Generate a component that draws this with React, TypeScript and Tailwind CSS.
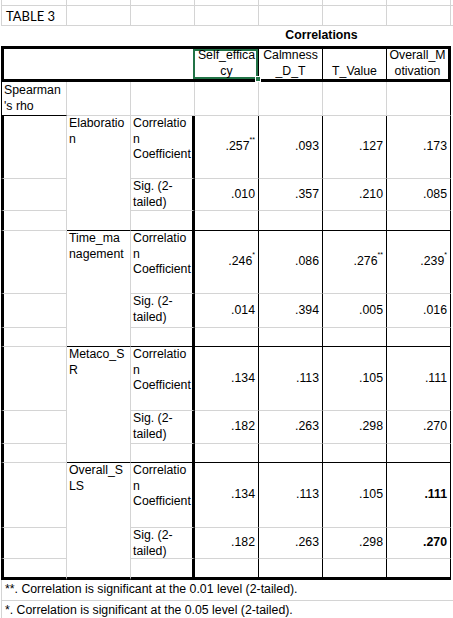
type Val = { v: string; sup?: string; bold?: boolean };

type Group = { name: [string, string]; corr: Val[]; sig: Val[] };

const groups: Group[] = [
  {
    name: ["Elaboratio", "n"],
    corr: [{ v: ".257", sup: "**" }, { v: ".093" }, { v: ".127" }, { v: ".173" }],
    sig: [{ v: ".010" }, { v: ".357" }, { v: ".210" }, { v: ".085" }],
  },
  {
    name: ["Time_ma", "nagement"],
    corr: [{ v: ".246", sup: "*" }, { v: ".086" }, { v: ".276", sup: "**" }, { v: ".239", sup: "*" }],
    sig: [{ v: ".014" }, { v: ".394" }, { v: ".005" }, { v: ".016" }],
  },
  {
    name: ["Metaco_S", "R"],
    corr: [{ v: ".134" }, { v: ".113" }, { v: ".105" }, { v: ".111" }],
    sig: [{ v: ".182" }, { v: ".263" }, { v: ".298" }, { v: ".270" }],
  },
  {
    name: ["Overall_S", "LS"],
    corr: [{ v: ".134" }, { v: ".113" }, { v: ".105" }, { v: ".111", bold: true }],
    sig: [{ v: ".182" }, { v: ".263" }, { v: ".298" }, { v: ".270", bold: true }],
  },
];

function Num({ val }: { val: Val }) {
  return (
    <span className={val.bold ? "font-bold" : ""}>
      {val.v}
      {val.sup && <span className="relative -top-[8px] text-[7px] leading-none">{val.sup}</span>}
    </span>
  );
}

// thin gray spreadsheet gridline cell
function GridCell({ first }: { first?: boolean }) {
  return (
    <div
      className={
        first
          ? "border-l border-r border-b border-[#d4d4d4]"
          : "border-r border-b border-[#d4d4d4]"
      }
    />
  );
}

function GroupRows({ g, last }: { g: Group; last: boolean }) {
  const colA = "border-l-[3px] border-l-black border-r border-r-[#d4d4d4] border-b border-b-[#d4d4d4]";
  const numCell =
    "flex items-center justify-end pr-[3px] border-r border-r-black border-b border-b-[#d4d4d4]";
  return (
    <>
      {/* correlation coefficient row */}
      <div className={colA} />
      <div
        className={
          "row-span-3 whitespace-nowrap pl-[2px] border-r border-r-[#d4d4d4] " +
          (last ? "border-b-[3px] border-b-black" : "border-b border-b-black")
        }
      >
        {g.name[0]}
        <br />
        {g.name[1]}
      </div>
      <div className="whitespace-nowrap pl-[2px] border-r-[3px] border-r-black border-b border-b-[#d4d4d4]">
        Correlatio
        <br />n
        <br />
        Coefficient
      </div>
      {g.corr.map((v, i) => (
        <div key={i} className={numCell}>
          <Num val={v} />
        </div>
      ))}
      <div />

      {/* sig row */}
      <div className={colA} />
      <div className="whitespace-nowrap pl-[2px] border-r-[3px] border-r-black border-b border-b-[#d4d4d4]">
        Sig. (2-
        <br />
        tailed)
      </div>
      {g.sig.map((v, i) => (
        <div key={i} className={numCell}>
          <Num val={v} />
        </div>
      ))}
      <div />

      {/* blank row */}
      <div
        className={
          last
            ? "border-l-[3px] border-l-black border-r border-r-[#d4d4d4] border-b-[3px] border-b-black"
            : colA
        }
      />
      <div
        className={
          last
            ? "border-r-[3px] border-r-black border-b-[3px] border-b-black"
            : "border-r-[3px] border-r-black border-b border-b-black"
        }
      />
      {[0, 1, 2, 3].map((i) => (
        <div
          key={i}
          className={
            last
              ? "border-r border-r-black border-b-[3px] border-b-black"
              : "border-r border-r-black border-b border-b-black"
          }
        />
      ))}
      <div />
    </>
  );
}

export default function App() {
  return (
    <div className="w-[453px] h-[618px] overflow-hidden bg-white pl-px font-['Liberation_Sans',Arial,sans-serif] text-[12.3px] leading-[15.5px] text-black">
      <div className="grid grid-cols-[66px_64px_64px_64px_64px_64px_64px_1fr] grid-rows-[6px_20px_20px_36px_34px_63px_32px_20px_63px_34px_19px_64px_33px_19px_65px_31px_21px_21px_20px]">
        {/* partial top row */}
        <GridCell first />
        {[0, 1, 2, 3, 4, 5].map((i) => (
          <GridCell key={i} />
        ))}
        <div className="border-b border-[#d4d4d4]" />

        {/* title row */}
        <div className="flex items-center pl-[4px] border-l border-r border-b border-[#d4d4d4] font-['Lato',sans-serif] text-[13px] leading-[16px]">
          TABLE 3
        </div>
        {[0, 1, 2, 3, 4, 5].map((i) => (
          <GridCell key={i} />
        ))}
        <div className="border-b border-[#d4d4d4]" />

        {/* caption */}
        <div className="col-span-3" />
        <div className="col-span-4 flex items-center justify-center pr-[3px] font-bold">Correlations</div>
        <div />

        {/* header */}
        <div className="col-span-3 border-t-[3px] border-l-[3px] border-b-[3px] border-black" />
        <div className="relative flex flex-col items-center justify-end text-center leading-[16px] border-t-[3px] border-b-[3px] border-r border-black">
          <span className="relative z-20">Self_effica</span>
          <span className="relative z-20">cy</span>
          <div className="absolute -left-[2px] top-0 right-0 bottom-0 z-10 border-2 border-[#217346]" />
          <div className="absolute -right-[3px] -bottom-[3px] z-20 h-[6px] w-[6px] bg-[#217346] border border-white" />
        </div>
        <div className="flex flex-col items-center justify-end text-center leading-[16px] border-t-[3px] border-b-[3px] border-r border-black">
          <span>Calmness</span>
          <span>_D_T</span>
        </div>
        <div className="flex flex-col items-center justify-end text-center leading-[16px] border-t-[3px] border-b-[3px] border-r border-black">
          <span>T_Value</span>
        </div>
        <div className="flex flex-col items-center justify-end text-center leading-[16px] border-t-[3px] border-b-[3px] border-r-[3px] border-black">
          <span>Overall_M</span>
          <span>otivation</span>
        </div>
        <div />

        {/* Spearman's rho row */}
        <div className="flex flex-col justify-end pb-px pl-[2px] whitespace-nowrap border-l border-l-black border-r border-r-[#d4d4d4] border-b border-b-black">
          <span>Spearman</span>
          <span>'s rho</span>
        </div>
        <GridCell />
        <GridCell />
        <GridCell />
        <GridCell />
        <GridCell />
        <div className="border-r border-r-black border-b border-b-[#d4d4d4]" />
        <div />

        {groups.map((g, i) => (
          <GroupRows key={i} g={g} last={i === groups.length - 1} />
        ))}

        {/* footnotes */}
        <div className="col-span-8 flex items-center pl-[3px] whitespace-nowrap border-l border-b border-[#d4d4d4]">
          **. Correlation is significant at the 0.01 level (2-tailed).
        </div>
        <div className="col-span-8 flex items-center pl-[3px] whitespace-nowrap border-l border-[#d4d4d4]">
          *. Correlation is significant at the 0.05 level (2-tailed).
        </div>
      </div>
    </div>
  );
}
